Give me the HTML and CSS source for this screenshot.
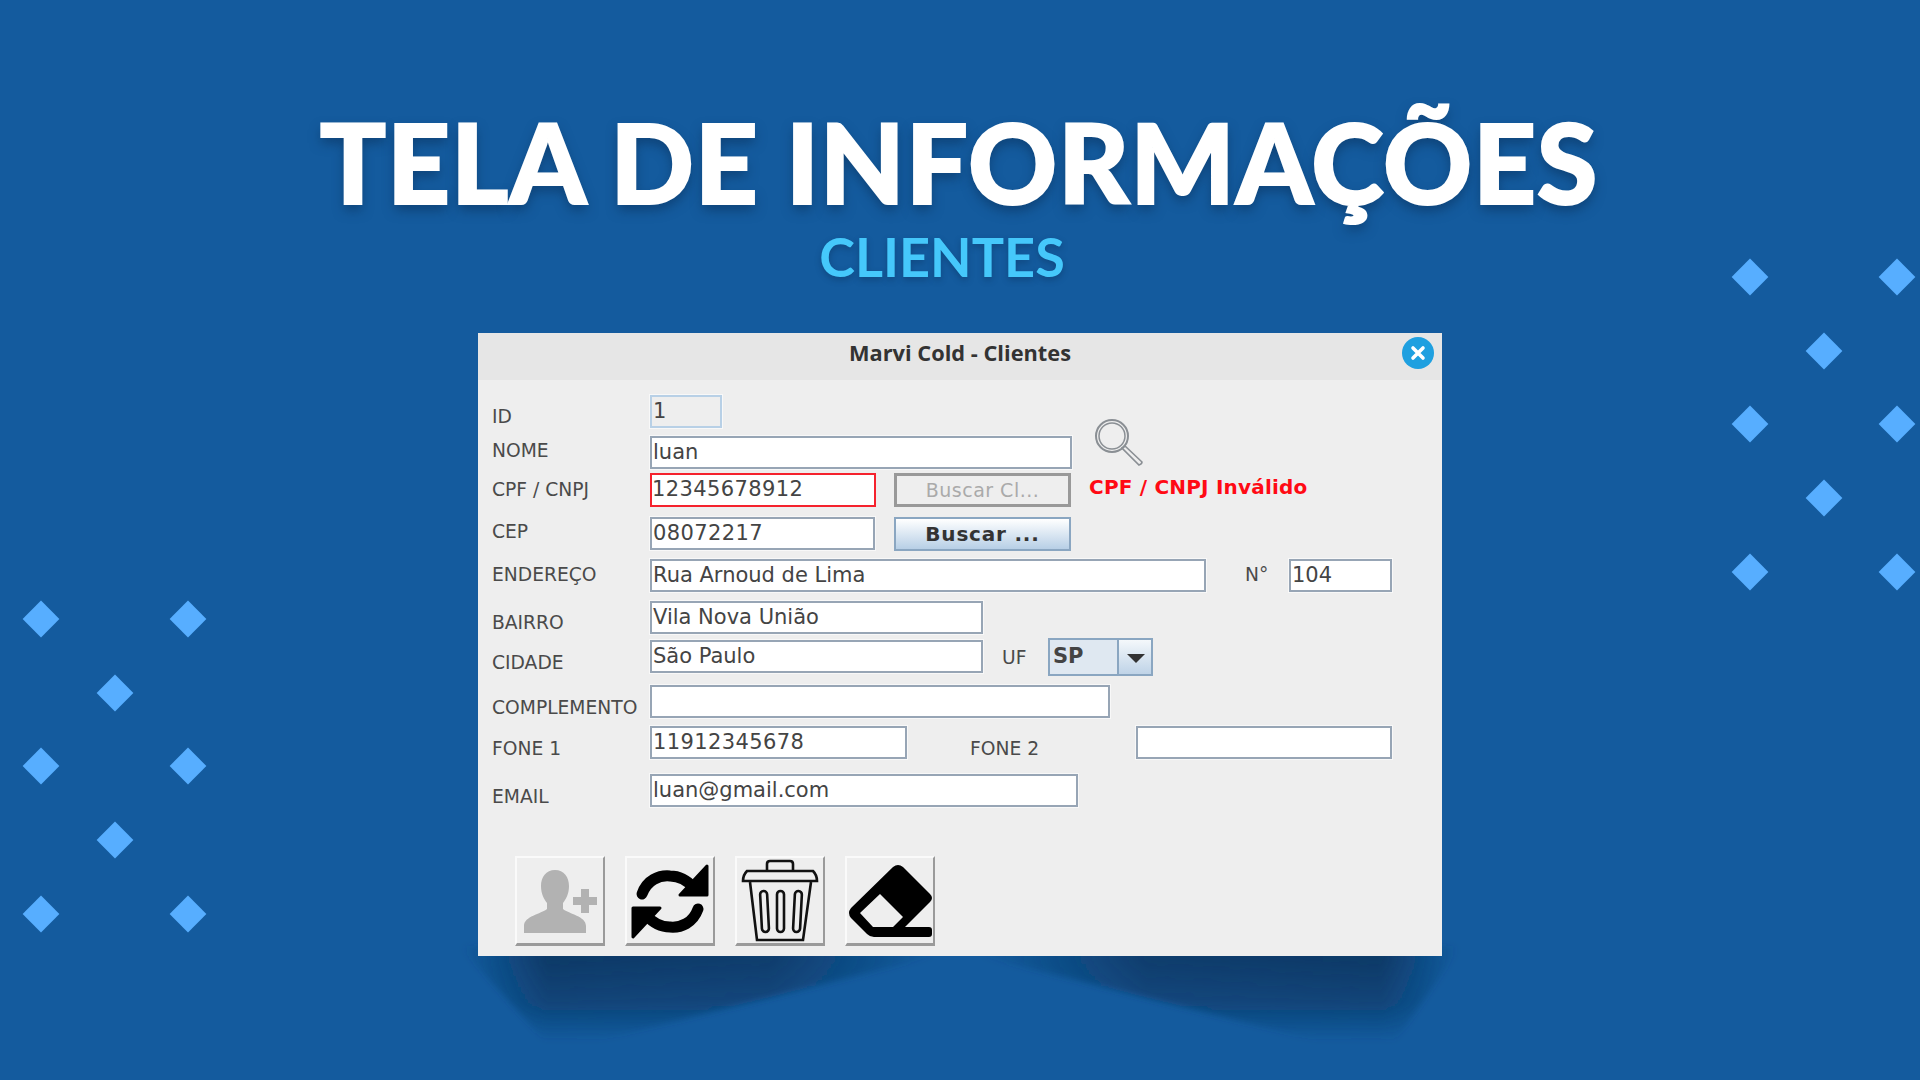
FILE: index.html
```html
<!DOCTYPE html>
<html lang="pt-BR">
<head>
  <meta charset="UTF-8" />
  <title>Tela de Informações - Clientes</title>
  <link rel="stylesheet" href="styles.css">
</head>
<body>

  <div class="dots dots-left">
    <i class="dot"></i><i></i><i class="dot"></i>
    <i></i><i class="dot"></i><i></i>
    <i class="dot"></i><i></i><i class="dot"></i>
    <i></i><i class="dot"></i><i></i>
    <i class="dot"></i><i></i><i class="dot"></i>
  </div>
  <div class="dots dots-right">
    <i class="dot"></i><i></i><i class="dot"></i>
    <i></i><i class="dot"></i><i></i>
    <i class="dot"></i><i></i><i class="dot"></i>
    <i></i><i class="dot"></i><i></i>
    <i class="dot"></i><i></i><i class="dot"></i>
  </div>

  <h1>TELA DE INFORMAÇÕES</h1>
  <h2>CLIENTES</h2>

  <div class="stage">
    <svg class="shadow" width="1020" height="90" viewBox="0 0 1020 90">
      <defs>
        <filter id="soft" x="-5%" y="-30%" width="110%" height="160%"><feGaussianBlur stdDeviation="3"/></filter>
        <linearGradient id="fade" x1="0" y1="0" x2="0" y2="1">
          <stop offset=".15" stop-color="#0c3a68" stop-opacity="1"/>
          <stop offset=".6" stop-color="#0c3a68" stop-opacity=".7"/>
          <stop offset="1" stop-color="#0c3a68" stop-opacity="0"/>
        </linearGradient>
        <linearGradient id="sideLeft" gradientUnits="userSpaceOnUse" x1="3" y1="0" x2="475" y2="0">
          <stop offset="0" stop-color="#fff" stop-opacity="0"/>
          <stop offset=".18" stop-color="#fff" stop-opacity="1"/>
          <stop offset=".65" stop-color="#fff" stop-opacity=".9"/>
          <stop offset="1" stop-color="#fff" stop-opacity="0"/>
        </linearGradient>
        <linearGradient id="sideRight" gradientUnits="userSpaceOnUse" x1="520" y1="0" x2="997" y2="0">
          <stop offset="0" stop-color="#fff" stop-opacity="0"/>
          <stop offset=".35" stop-color="#fff" stop-opacity=".9"/>
          <stop offset=".84" stop-color="#fff" stop-opacity="1"/>
          <stop offset="1" stop-color="#fff" stop-opacity="0"/>
        </linearGradient>
        <mask id="maskLeft" maskUnits="userSpaceOnUse" x="0" y="-20" width="1020" height="120"><rect y="-20" width="1020" height="120" fill="url(#sideLeft)"/></mask>
        <mask id="maskRight" maskUnits="userSpaceOnUse" x="0" y="-20" width="1020" height="120"><rect y="-20" width="1020" height="120" fill="url(#sideRight)"/></mask>
      </defs>
      <g filter="url(#soft)">
        <path d="M-1 -10 L515 -10 L135 85 L85 85 Z" fill="url(#fade)" mask="url(#maskLeft)"/>
        <path d="M480 -10 L1001 -10 L935 85 L860 85 Z" fill="url(#fade)" mask="url(#maskRight)"/>
      </g>
    </svg>

    <div class="window">
      <div class="titlebar">
        <span class="title">Marvi Cold - Clientes</span>
        <span class="close">
          <svg width="32" height="32" viewBox="0 0 32 32"><circle cx="16" cy="16" r="16" fill="#1fa0e0"/><path d="M11 11 L21 21 M21 11 L11 21" stroke="#fff" stroke-width="3.6" stroke-linecap="round"/></svg>
        </span>
      </div>

      <div class="form">
        <div class="row row-id">
          <label>ID</label>
          <div class="field readonly w-id">1</div>
        </div>

        <div class="row row-nome">
          <label>NOME</label>
          <div class="field w-nome">luan</div>
          <svg class="lupa" width="50" height="50" viewBox="0 0 50 50" fill="none" stroke="#8a8f94">
            <circle cx="19" cy="19" r="16" stroke-width="2"/>
            <circle cx="19" cy="19" r="13" stroke-width="1.5"/>
            <path d="M29 31 L32 29 L49 45 Q49 47 46 48 Z" stroke-width="1.6"/>
          </svg>
        </div>

        <div class="row row-cpf">
          <label>CPF / CNPJ</label>
          <div class="field invalid w-cpf">12345678912</div>
          <div class="btn disabled">Buscar Cl...</div>
          <span class="erro">CPF / CNPJ Inválido</span>
        </div>

        <div class="row row-cep">
          <label>CEP</label>
          <div class="field w-cep">08072217</div>
          <div class="btn active">Buscar ...</div>
        </div>

        <div class="row row-end">
          <label>ENDEREÇO</label>
          <div class="field w-end">Rua Arnoud de Lima</div>
          <label class="lbl-num">N°</label>
          <div class="field w-num">104</div>
        </div>

        <div class="row row-bairro">
          <label>BAIRRO</label>
          <div class="field w-bairro">Vila Nova União</div>
        </div>

        <div class="row row-cidade">
          <label>CIDADE</label>
          <div class="field w-bairro">São Paulo</div>
          <label class="lbl-uf">UF</label>
          <div class="combo">
            <span class="combo-val">SP</span>
            <span class="combo-arrow"></span>
          </div>
        </div>

        <div class="row row-comp">
          <label>COMPLEMENTO</label>
          <div class="field w-comp"></div>
        </div>

        <div class="row row-fone">
          <label>FONE 1</label>
          <div class="field w-fone">11912345678</div>
          <label class="lbl-fone2">FONE 2</label>
          <div class="field w-fone2"></div>
        </div>

        <div class="row row-email">
          <label>EMAIL</label>
          <div class="field w-email">luan@gmail.com</div>
        </div>

        <div class="actions">
          <div class="tool">
            <svg width="86" height="85" viewBox="0 0 86 85" fill="#b2b2b2">
              <path d="M38 12 C47 12 52 19 52 28 C52 36 49 41 46 45 L46 51 C52 56 69 58 69 68 L69 75 L7 75 L7 68 C7 58 24 56 30 51 L30 45 C27 41 24 36 24 28 C24 19 29 12 38 12 Z"/>
              <path d="M64 31 H72 V39 H80 V47 H72 V55 H64 V47 H56 V39 H64 Z"/>
            </svg>
          </div>
          <div class="tool">
            <svg width="86" height="85" viewBox="0 0 86 85">
              <path d="M15 36 C20 22 32 17 43 18 C52 18 60 22 67 30" fill="none" stroke="#000" stroke-width="11" stroke-linecap="round"/>
              <path d="M80 8 V37 H53 Z" stroke="#000" stroke-width="3" stroke-linejoin="round"/>
              <path d="M71 51 C66 65 54 70 43 69 C34 69 26 65 19 57" fill="none" stroke="#000" stroke-width="11" stroke-linecap="round"/>
              <path d="M6 79 V50 H33 Z" stroke="#000" stroke-width="3" stroke-linejoin="round"/>
            </svg>
          </div>
          <div class="tool">
            <svg width="86" height="85" viewBox="0 0 86 85" fill="none" stroke="#111" stroke-width="2.6">
              <path d="M30 13 V6 Q30 3 33 3 H53 Q56 3 56 6 V13"/>
              <path d="M10 13 H76 Q80 17 80 23 H6 Q6 17 10 13 Z"/>
              <path d="M13 24 L20 82 H66 L74 24"/>
              <rect x="24" y="33" width="7" height="41" rx="3.5" transform="rotate(-3 27 53)"/>
              <rect x="40" y="33" width="7" height="41" rx="3.5"/>
              <rect x="57" y="33" width="7" height="41" rx="3.5" transform="rotate(3 60 53)"/>
            </svg>
          </div>
          <div class="tool">
            <svg width="86" height="85" viewBox="0 0 86 85">
              <path fill-rule="evenodd" d="M46 9 Q51 5 56 9 L83 36 Q87 40 83 44 L58 69 L82 69 Q85 69 85 72 V76 Q85 79 82 79 L27 79 Q23 79 20 76 L4 60 Q0 55 4 50 Z M33 36 L13 55 L26 69 L46 69 L56 59 Z"/>
            </svg>
          </div>
        </div>
      </div>
    </div>
  </div>

</body>
</html>
```

FILE: styles.css
```css
html, body {
  margin: 0;
  padding: 0;
}
body {
  width: 1920px;
  height: 1080px;
  overflow: hidden;
  position: relative;
  background: #145b9e;
  font-family: 'DejaVu Sans', sans-serif;
}
h1 {
  margin: 0;
  padding: 97px 2px 0 0;
  height: 129px;
  line-height: 129px;
  text-align: center;
  font-family: 'Lato', sans-serif;
  font-size: 110px;
  font-weight: 900;
  letter-spacing: 0.8px;
  color: #fff;
  -webkit-text-stroke: 2px #fff;
  text-shadow: 0 6px 12px rgba(10, 45, 85, 0.55);
}
h2 {
  margin: 0;
  height: 107px;
  line-height: 62px;
  padding-right: 36px;
  text-align: center;
  font-family: 'Lato', sans-serif;
  font-size: 54px;
  font-weight: 700;
  color: #45c8fb;
  text-shadow: 0 3px 6px rgba(10, 45, 85, 0.4);
}

/* diamonds */
.dots {
  position: absolute;
  display: grid;
  grid-template-columns: repeat(3, 73.7px);
  grid-auto-rows: 73.7px;
}
.dots-left { left: 4px; top: 582px; }
.dots-right { left: 1713px; top: 240px; }
.dot {
  display: block;
  width: 26px;
  height: 26px;
  margin: 24px;
  background: #57aeff;
  transform: rotate(45deg);
}

/* window */
.stage {
  position: relative;
  width: 964px;
  height: 623px;
  margin-left: 478px;
}
.shadow {
  position: absolute;
  left: -18px;
  top: 623px;
  overflow: visible;
}
.window {
  position: relative;
  height: 623px;
  background: #eeeeee;
  color: #3c3c3c;
}
.titlebar {
  box-sizing: border-box;
  height: 47px;
  padding-bottom: 8px;
  background: #e6e6e6;
  display: flex;
  align-items: center;
  justify-content: center;
  position: relative;
}
.title {
  font-family: 'Open Sans', sans-serif;
  font-weight: 700;
  font-size: 21.8px;
  color: #333;
}
.close {
  position: absolute;
  right: 8px;
  top: 4px;
  height: 32px;
}
.form {
  padding: 15px 0 0 14px;
}
.row {
  display: flex;
  align-items: flex-start;
}
.row label {
  width: 158px;
  flex: none;
  font-family: 'DejaVu Sans', sans-serif;
  font-size: 18.7px;
  line-height: 24px;
  color: #4a4a4a;
  white-space: nowrap;
}
.row-id { height: 41px; }
.row-id label { padding-top: 10px; }
.row-nome { height: 37px; }
.row-nome label { padding-top: 3px; }
.row-cpf { height: 44px; }
.row-cpf label { padding-top: 5px; }
.row-cep { height: 42px; }
.row-cep label { padding-top: 3px; }
.row-end { height: 42px; }
.row-end label { padding-top: 4px; }
.row-bairro { height: 39px; }
.row-bairro label { padding-top: 10px; }
.row-cidade { height: 45px; }
.row-cidade label { padding-top: 11px; }
.row-comp { height: 41px; }
.row-comp label { padding-top: 11px; }
.row-fone { height: 48px; }
.row-fone label { padding-top: 11px; }
.row-email { height: 49px; }
.row-email label { padding-top: 11px; }

.field {
  box-sizing: border-box;
  height: 33px;
  flex: none;
  background: #fff;
  border: 2px solid #97a5b5;
  box-shadow: 0 0 0 1px #f8f8f8;
  padding-left: 1px;
  font-size: 21px;
  line-height: 29px;
  color: #444;
  white-space: nowrap;
}
.readonly {
  background: #eeeeee;
  border-color: #b8d0e6;
}
.invalid {
  height: 34px;
  border-color: #f5222d;
  padding-left: 0;
  box-shadow: none;
  letter-spacing: 0.4px;
}
.w-id { width: 72px; }
.w-nome { width: 422px; }
.w-cpf { width: 226px; }
.w-cep { width: 225px; letter-spacing: 0.4px; }
.w-end { width: 556px; }
.w-num { width: 103px; }
.w-bairro { width: 333px; }
.w-comp { width: 460px; }
.w-fone { width: 257px; letter-spacing: 0.4px; }
.w-fone2 { width: 256px; }
.w-email { width: 428px; }

.lupa {
  margin: -19px 0 0 21px;
}
.btn {
  box-sizing: border-box;
  width: 177px;
  height: 34px;
  margin-left: 18px;
  flex: none;
  text-align: center;
  font-size: 19px;
  white-space: nowrap;
}
.active {
  margin-left: 19px;
}
.disabled {
  border: 3px solid #999;
  color: #aaa;
  line-height: 28px;
  letter-spacing: 0.5px;
}
.active {
  border: 2px solid #8aa6c1;
  background: linear-gradient(#fff, #b7cfe6);
  color: #333;
  font-size: 20px;
  font-weight: 700;
  line-height: 30px;
  letter-spacing: 0.8px;
}
.erro {
  margin: 2px 0 0 18px;
  font-size: 20px;
  font-weight: 700;
  letter-spacing: 0.2px;
  color: #ff0a14;
  white-space: nowrap;
}
.row .lbl-num {
  width: 44px;
  margin-left: 39px;
}
.row .lbl-uf {
  width: 46px;
  margin-left: 19px;
  padding-top: 6px;
}
.row .lbl-fone2 {
  width: 166px;
  margin-left: 63px;
}
.combo {
  box-sizing: border-box;
  display: flex;
  width: 105px;
  height: 38px;
  margin-top: -2px;
  border: 2px solid #8aa6c1;
  background: #dfe8f1;
}
.combo-val {
  flex: 1;
  border-right: 2px solid #8aa6c1;
  padding-left: 3px;
  font-size: 21px;
  font-weight: 700;
  line-height: 32px;
  color: #444;
}
.combo-arrow {
  width: 32px;
  background: linear-gradient(#f4f8fb, #bfd3e7);
  position: relative;
}
.combo-arrow::after {
  content: "";
  position: absolute;
  left: 8px;
  top: 14px;
  border-left: 9px solid transparent;
  border-right: 9px solid transparent;
  border-top: 9px solid #333;
}

/* bottom buttons */
.actions {
  display: flex;
  gap: 20px;
  margin: 33px 0 0 23px;
}
.tool {
  box-sizing: border-box;
  width: 90px;
  height: 90px;
  overflow: hidden;
  border-top: 2px solid #fafafa;
  border-left: 2px solid #fafafa;
  border-right: 2px solid #9a9a9a;
  border-bottom: 3px solid #9a9a9a;
  background: #eeeeee;
}
.tool svg {
  display: block;
}
```
